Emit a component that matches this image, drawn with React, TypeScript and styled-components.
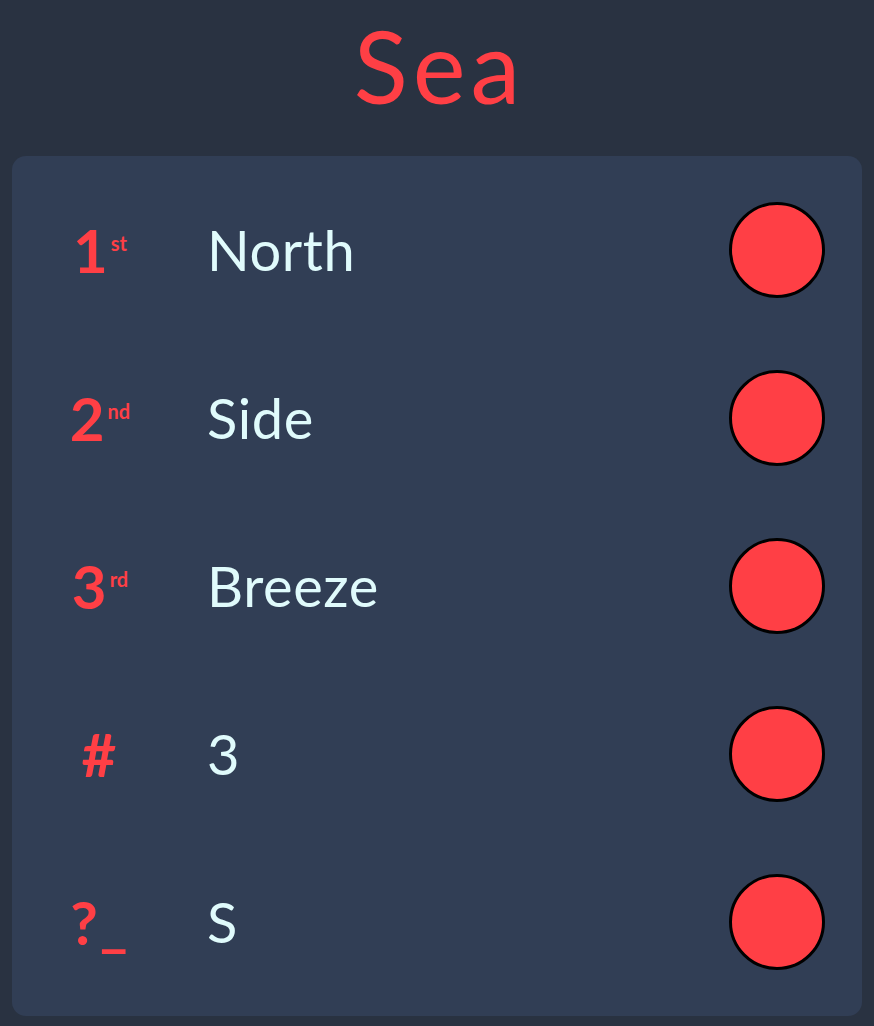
import styled, { createGlobalStyle } from "styled-components";

const GlobalStyle = createGlobalStyle`
  html, body {
    margin: 0;
    padding: 0;
    background: #293241;
  }
  body {
    font-family: "Lato", "Noto Sans", sans-serif;
  }
`;

const Page = styled.div`
  display: flex;
  flex-direction: column;
  width: 874px;
  height: 1026px;
  padding: 0 12px 10px;
  box-sizing: border-box;
`;

const Title = styled.h1`
  height: 156px;
  margin: 0;
  display: flex;
  align-items: center;
  justify-content: center;
  padding: 0 0 26px 5px;
  box-sizing: border-box;
  font-size: 100px;
  font-weight: 400;
  color: #ff3f45;
  letter-spacing: 5px;
`;

const Card = styled.div`
  flex: 1;
  display: flex;
  flex-direction: column;
  padding: 10px 0;
  background: #313e55;
  border-radius: 14px;
  box-sizing: border-box;
`;

const Row = styled.div`
  height: 168px;
  display: grid;
  grid-template-columns: 176px 1fr auto;
  column-gap: 19px;
  align-items: center;
  padding-right: 37px;
`;

const Rank = styled.div`
  text-align: center;
  color: #ff3f45;
  font-size: 60px;
  font-weight: 700;
  line-height: 1;
  letter-spacing: 2px;
`;

const Suffix = styled.sup`
  font-size: 20px;
  font-weight: 700;
  vertical-align: 22px;
  margin-left: 1px;
  letter-spacing: 0;
`;

const Name = styled.div`
  color: #e0fbfc;
  font-size: 56px;
  font-weight: 400;
  line-height: 1;
  letter-spacing: 0.6px;
`;

const Dot = styled.div`
  width: 90px;
  height: 90px;
  border-radius: 50%;
  background: #ff3f45;
  border: 3px solid #000;
`;

interface Entry {
  rank: string;
  suffix?: string;
  name: string;
}

const entries: Entry[] = [
  { rank: "1", suffix: "st", name: "North" },
  { rank: "2", suffix: "nd", name: "Side" },
  { rank: "3", suffix: "rd", name: "Breeze" },
  { rank: "#", name: "3" },
  { rank: "?_", name: "S" },
];

export default function App() {
  return (
    <Page>
      <GlobalStyle />
      <Title>Sea</Title>
      <Card>
        {entries.map((e) => (
          <Row key={e.rank}>
            <Rank>
              {e.rank}
              {e.suffix && <Suffix>{e.suffix}</Suffix>}
            </Rank>
            <Name>{e.name}</Name>
            <Dot />
          </Row>
        ))}
      </Card>
    </Page>
  );
}
